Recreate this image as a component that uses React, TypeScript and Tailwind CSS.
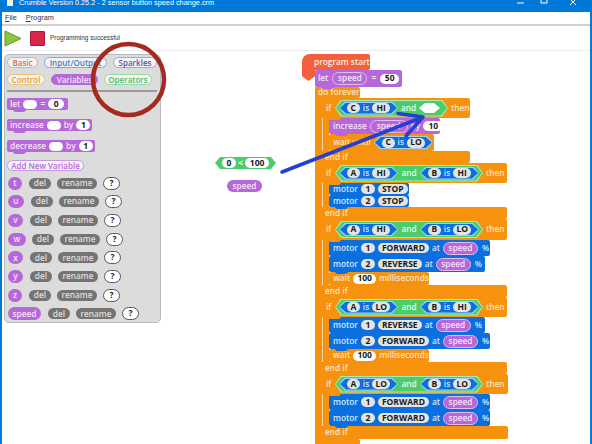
import React from "react";

const HEX =
  "[clip-path:polygon(6px_0,calc(100%-6px)_0,100%_50%,calc(100%-6px)_100%,6px_100%,0_50%)]";

function Notch({ c }: { c: string }) {
  return <span className={`absolute left-[6px] bottom-[-2px] z-10 h-[3px] w-[13px] rounded-b-[3px] ${c}`} />;
}

function Pill({ children, w = "px-[4px]", dark = false }: { children: React.ReactNode; w?: string; dark?: boolean }) {
  return (
    <span className={`flex h-[10px] shrink-0 items-center justify-center rounded-full text-[8.5px] font-bold text-[#1a1a1a] ${dark ? "bg-[#e4e4e4]" : "bg-white"} ${w}`}>
      {children}
    </span>
  );
}

function Speed({ w = "w-[35px]" }: { w?: string }) {
  return (
    <span className={`flex h-[13px] shrink-0 items-center justify-center rounded-full border border-[#e3bdf0] bg-[#b768d8] text-[8.3px] font-semibold text-[#f3e3fa] ${w}`}>
      speed
    </span>
  );
}

function Cond({ a, b, w = "w-[59px]" }: { a: string; b: string; w?: string }) {
  return (
    <span className={`flex h-[13px] shrink-0 items-center justify-center bg-[#a8cdf5] p-[1px] ${HEX} ${w}`}>
      <span className={`flex h-full w-full items-center justify-center gap-[3px] bg-[#0b6fe0] text-[8.3px] font-semibold text-[#d5e6fa] ${HEX}`}>
        <Pill dark w="w-[13px]">{a}</Pill>
        is
        <Pill dark w="w-[18px]">{b}</Pill>
      </span>
    </span>
  );
}

function And({ a, b, c, w }: { a?: [string, string]; b?: [string, string]; c?: boolean; w: string }) {
  return (
    <span className={`flex h-[17px] shrink-0 items-center bg-[#a5ecb5] p-[1px] ${HEX} ${w}`}>
      <span className={`flex h-full w-full items-center justify-between bg-[#4ccd6b] px-[3px] text-[8.3px] font-semibold text-[#e6f9ea] ${HEX}`}>
        {a && <Cond a={a[0]} b={a[1]} />}
        {c && <Cond a="C" b="HI" />}
        and
        {c ? (
          <span className={`mr-[4px] h-[10px] w-[21px] bg-white ${HEX}`} />
        ) : (
          b && <Cond a={b[0]} b={b[1]} />
        )}
      </span>
    </span>
  );
}

function IfHead({ w, h = "h-[20px]", cond }: { w: string; h?: string; cond: React.ReactNode }) {
  return (
    <div className={`relative flex items-center gap-[2px] rounded-r-[2px] bg-[#f7920f] pl-[4px] text-[8.3px] font-semibold text-[#fde3c0] ${w} ${h}`}>
      <span className="mr-[1px] w-[6px]">if</span>
      {cond}
      <span className="ml-[1px]">then</span>
      <Notch c="bg-[#f7920f]" />
    </div>
  );
}

function EndIf({ w, h = "h-[12px]" }: { w: string; h?: string }) {
  return (
    <div className={`relative flex items-center rounded-r-[2px] bg-[#f7920f] pl-[3px] text-[8.3px] font-semibold text-[#fde3c0] ${w} ${h}`}>
      end if
      <Notch c="bg-[#f7920f]" />
    </div>
  );
}

function Motor({ n, act, w, h = "h-[16px]", speed = true }: { n: string; act: string; w: string; h?: string; speed?: boolean }) {
  return (
    <div className={`relative flex items-center gap-[3px] rounded-[2px] bg-[#0b6fe0] pl-[4px] text-[8.3px] font-semibold text-[#d5e6fa] ${w} ${h}`}>
      motor
      <Pill dark w="w-[14px]">{n}</Pill>
      <Pill dark>{act}</Pill>
      {speed && (
        <>
          at
          <Speed />
          <span className="ml-[1px]">%</span>
        </>
      )}
      <Notch c="bg-[#0b6fe0]" />
    </div>
  );
}

function Wait() {
  return (
    <div className="relative flex h-[13px] w-[100px] items-center gap-[3px] rounded-[2px] bg-[#f7920f] pl-[4px] text-[8.3px] font-semibold text-[#fde3c0]">
      wait
      <Pill w="w-[23px]">100</Pill>
      milliseconds
    </div>
  );
}

function Group({ head, end, children }: { head: React.ReactNode; end: React.ReactNode; children: React.ReactNode }) {
  return (
    <div className="flex flex-col">
      {head}
      <div className="flex">
        <div className="w-[7px] border-l border-[#fcd9a8] bg-[#f7920f]" />
        <div className="flex flex-col">{children}</div>
      </div>
      {end}
    </div>
  );
}

function Script() {
  return (
    <div className="absolute left-[300px] top-[3px] flex w-[210px] flex-col">
      <div className="relative flex h-[16px] w-[68px] items-center rounded-tl-[8px] rounded-r-[2px] bg-[#f5603c] pl-[12px] text-[8.3px] font-semibold text-[#fdeee8]">
        program start
        <span className="absolute left-0 top-[15px] h-[12px] w-[13px] bg-[#f5603c] [clip-path:polygon(0_0,100%_0,100%_60%,50%_100%,0_60%)]" />
      </div>
      <div className="ml-[13px] flex flex-col">
        <div className="relative flex h-[17px] w-[87px] items-center gap-[4px] rounded-[2px] bg-[#b768d8] pl-[3px] text-[8.3px] font-semibold text-[#f3e3fa]">
          let
          <Speed />
          =
          <Pill w="w-[19px]">50</Pill>
          <Notch c="bg-[#b768d8]" />
        </div>
        <div className="relative flex h-[11px] w-[45px] items-center rounded-r-[2px] bg-[#f7920f] pl-[3px] text-[8.3px] font-semibold text-[#fde3c0]">
          do forever
        </div>
        <div className="flex">
          <div className="w-[7px] bg-[#f7920f]" />
          <div className="flex flex-col">
            <Group
              head={<IfHead w="w-[148px]" cond={<And c w="w-[113px]" />} />}
              end={<EndIf w="w-[148px]" />}
            >
              <div className="relative flex h-[16px] w-[111px] items-center gap-[3px] rounded-[2px] bg-[#b768d8] pl-[4px] text-[8.3px] font-semibold text-[#f3e3fa]">
                increase
                <Speed w="w-[38px]" />
                by
                <Pill w="w-[20px]">10</Pill>
                <Notch c="bg-[#b768d8]" />
              </div>
              <div className="relative flex h-[17px] w-[105px] items-center gap-[3px] rounded-[2px] bg-[#f7920f] pl-[4px] text-[8.3px] font-semibold text-[#fde3c0]">
                wait until
                <Cond a="C" b="LO" />
              </div>
            </Group>
            <Group
              head={<IfHead w="w-[185px]" cond={<And a={["A", "HI"]} b={["B", "HI"]} w="w-[148px]" />} />}
              end={<EndIf w="w-[185px]" />}
            >
              <Motor n="1" act="STOP" w="w-[80px]" h="h-[12px]" speed={false} />
              <Motor n="2" act="STOP" w="w-[80px]" h="h-[12px]" speed={false} />
            </Group>
            <Group
              head={<IfHead w="w-[185px]" h="h-[21px]" cond={<And a={["A", "HI"]} b={["B", "LO"]} w="w-[148px]" />} />}
              end={<EndIf w="w-[185px]" />}
            >
              <Motor n="1" act="FORWARD" w="w-[161px]" />
              <Motor n="2" act="REVERSE" w="w-[156px]" />
              <Wait />
            </Group>
            <Group
              head={<IfHead w="w-[185px]" cond={<And a={["A", "LO"]} b={["B", "HI"]} w="w-[148px]" />} />}
              end={<EndIf w="w-[185px]" />}
            >
              <Motor n="1" act="REVERSE" w="w-[156px]" />
              <Motor n="2" act="FORWARD" w="w-[161px]" />
              <Wait />
            </Group>
            <Group
              head={<IfHead w="w-[186px]" cond={<And a={["A", "LO"]} b={["B", "LO"]} w="w-[148px]" />} />}
              end={<EndIf w="w-[186px]" h="h-[13px]" />}
            >
              <Motor n="1" act="FORWARD" w="w-[161px]" />
              <Motor n="2" act="FORWARD" w="w-[161px]" />
            </Group>
          </div>
        </div>
        <div className="h-[11px] w-[45px] rounded-r-[2px] bg-[#f7920f]" />
      </div>
    </div>
  );
}

const TABS1 = [
  { t: "Basic", c: "w-[31px] border-[#e0a89c] bg-[#f4f4f4] text-[#d0705c]" },
  { t: "Input/Output", c: "w-[63px] border-[#7fa9dc] bg-[#f4f4f4] text-[#3c7fc8]" },
  { t: "Sparkles", c: "w-[44px] border-[#a8a4d0] bg-[#f4f4f4] text-[#5a52b0]" },
];
const TABS2 = [
  { t: "Control", c: "w-[38px] border-[#ecc07c] bg-[#f4f4f4] text-[#e8982c]" },
  { t: "Variables", c: "w-[47px] border-[#b768d8] bg-[#b768d8] text-[#f3e3fa]" },
  { t: "Operators", c: "w-[48px] border-[#90dca4] bg-[#f4f4f4] text-[#4cbc6c]" },
];

function Tab({ t, c }: { t: string; c: string }) {
  return (
    <span className={`flex h-[11px] items-center justify-center rounded-full border text-[8px] font-semibold ${c}`}>
      {t}
    </span>
  );
}

function PBlock({ w, children }: { w: string; children: React.ReactNode }) {
  return (
    <div className={`relative flex h-[12px] items-center gap-[3px] rounded-[2px] bg-[#b768d8] pl-[3px] text-[8.3px] font-semibold text-[#f3e3fa] ${w}`}>
      {children}
      <Notch c="bg-[#b768d8]" />
    </div>
  );
}

const VARS = [
  { n: "t", w: "w-[14px]", m: "mr-[7px]" },
  { n: "u", w: "w-[16px]", m: "mr-[7px]" },
  { n: "v", w: "w-[15px]", m: "mr-[7px]" },
  { n: "w", w: "w-[18px]", m: "mr-[6px]" },
  { n: "x", w: "w-[15px]", m: "mr-[7px]" },
  { n: "y", w: "w-[15px]", m: "mr-[7px]" },
  { n: "z", w: "w-[14px]", m: "mr-[7px]" },
  { n: "speed", w: "w-[33px]", m: "mr-[7px]" },
];

function Palette() {
  return (
    <div className="flex h-[269px] w-[157px] flex-col rounded-[5px] border border-[#b4bac0] bg-[#dcdcdc] px-[2px] pt-[2px]">
      <div className="flex gap-[6px]">
        {TABS1.map((t) => <Tab key={t.t} {...t} />)}
      </div>
      <div className="mt-[6px] flex gap-[6px]">
        {TABS2.map((t) => <Tab key={t.t} {...t} />)}
      </div>
      <div className="mt-[5px] h-[2px] w-[150px] bg-[#9a9a9a]" />
      <div className="mt-[6px] flex flex-col items-start gap-[9px]">
        <PBlock w="w-[61px]">
          let
          <span className="h-[9px] w-[14px] rounded-full bg-white" />
          =
          <Pill w="w-[16px]">0</Pill>
        </PBlock>
        <PBlock w="w-[85px]">
          increase
          <span className="h-[9px] w-[14px] rounded-full bg-white" />
          by
          <Pill w="w-[14px]">1</Pill>
        </PBlock>
        <PBlock w="w-[88px]">
          decrease
          <span className="h-[9px] w-[14px] rounded-full bg-white" />
          by
          <Pill w="w-[14px]">1</Pill>
        </PBlock>
      </div>
      <div className="mt-[8px] flex h-[11px] w-[77px] items-center justify-center rounded-full border border-[#c898e0] bg-[#f4f4f4] text-[8px] font-semibold text-[#b768d8]">
        Add New Variable
      </div>
      <div className="mt-[5px] ml-[1px] flex flex-col gap-[4.7px]">
        {VARS.map((v) => (
          <div key={v.n} className="flex h-[14px] items-center">
            <span className={`flex h-[13px] items-center justify-center rounded-full bg-[#b768d8] text-[8.3px] font-semibold text-[#f3e3fa] ${v.w} ${v.m}`}>
              {v.n}
            </span>
            <span className="mr-[6px] flex h-[11px] w-[22px] items-center justify-center rounded-full bg-[#747474] text-[8.3px] font-semibold text-[#dedede]">del</span>
            <span className="mr-[6px] flex h-[11px] w-[40px] items-center justify-center rounded-full bg-[#747474] text-[8.3px] font-semibold text-[#dedede]">rename</span>
            <span className="flex h-[13px] w-[17px] items-center justify-center rounded-full border border-[#555] bg-white text-[8.5px] font-bold text-[#222]">?</span>
          </div>
        ))}
      </div>
    </div>
  );
}

export default function App() {
  return (
    <div className="relative flex h-[444px] w-[592px] flex-col overflow-hidden whitespace-nowrap border-x-2 border-[#0078d7] bg-white [font-family:'Open_Sans','Noto_Sans',sans-serif]">
      <div className="-mx-[2px] flex h-[12px] items-center overflow-hidden bg-[#0078d7] text-white">
        <span className="ml-[7px] h-[6px] w-[6px] self-start bg-[#f4f0e4]" />
        <span className="ml-[6px] -translate-y-[3px] text-[7.3px] leading-[12px] [font-family:'Liberation_Sans',sans-serif]">
          Crumble Version 0.25.2 - 2 sensor button speed change.crm
        </span>
        <svg className="ml-auto mr-[9px] -translate-y-[3px]" width="66" height="12" viewBox="0 0 66 12" fill="none" stroke="#fff" strokeWidth="1">
          <path d="M0 6h7" />
          <path d="M24 1h6v5h-6z" />
          <path d="M53 2l6 6M59 2l-6 6" />
        </svg>
      </div>
      <div className="flex h-[14px] items-center gap-[9px] border-b-2 border-[#d0d0d0] pl-[3px] text-[7.3px] text-[#333] [font-family:'Liberation_Sans',sans-serif]">
        <span><span className="underline">F</span>ile</span>
        <span><span className="underline">P</span>rogram</span>
      </div>
      <div className="flex h-[25px] items-center border-b border-[#ececec] pl-[2px]">
        <svg width="18" height="17" viewBox="0 0 18 17">
          <path d="M1 1L17 8.5L1 16Z" fill="#8cc63f" stroke="#5f9a2c" strokeWidth="1" />
        </svg>
        <span className="ml-[8px] h-[15px] w-[15px] rounded-[1px] border border-[#a81c38] bg-[#d9264c]" />
        <span className="ml-[5px] text-[6.4px] text-[#333] [font-family:'Liberation_Sans',sans-serif]">Programming successful</span>
      </div>
      <div className="relative flex-1 pl-[2px] pt-[3px]">
        <Palette />
        <Script />
        <div className="absolute left-[213px] top-[106px] flex h-[12px] w-[61px] items-center justify-center gap-[2px] bg-[#4ccd6b] text-[9px] font-bold text-white [clip-path:polygon(5px_0,calc(100%-5px)_0,100%_50%,calc(100%-5px)_100%,5px_100%,0_50%)]">
          <Pill w="w-[14px]">0</Pill>
          &lt;
          <Pill w="w-[24px]">100</Pill>
        </div>
        <div className="absolute left-[225px] top-[129px] flex h-[12px] w-[35px] items-center justify-center rounded-full bg-[#b768d8] text-[8.3px] font-semibold text-[#f3e3fa]">
          speed
        </div>
      </div>
      <svg className="pointer-events-none absolute -left-[2px] top-0" width="592" height="444" viewBox="0 0 592 444" fill="none">
        <ellipse cx="128.5" cy="79.5" rx="35.5" ry="35.5" stroke="#a52a1e" strokeWidth="4.5" />
        <path d="M282 172L423 117M398 113.5L423 117L406 136" stroke="#2540d0" strokeWidth="3.5" strokeLinecap="round" strokeLinejoin="round" />
      </svg>
    </div>
  );
}
